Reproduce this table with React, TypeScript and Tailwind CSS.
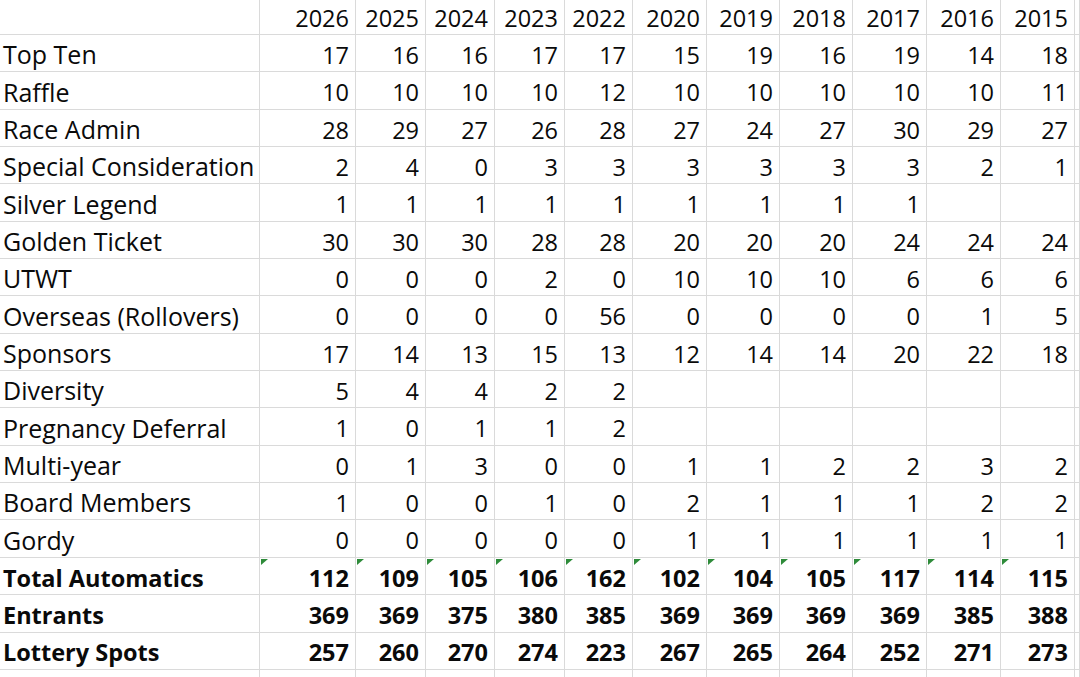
import React from "react";

const years = ["2026", "2025", "2024", "2023", "2022", "2020", "2019", "2018", "2017", "2016", "2015"];

const rows: { label: string; vals: (number | "")[]; bold?: boolean; tri?: boolean }[] = [
  { label: "Top Ten", vals: [17, 16, 16, 17, 17, 15, 19, 16, 19, 14, 18] },
  { label: "Raffle", vals: [10, 10, 10, 10, 12, 10, 10, 10, 10, 10, 11] },
  { label: "Race Admin", vals: [28, 29, 27, 26, 28, 27, 24, 27, 30, 29, 27] },
  { label: "Special Consideration", vals: [2, 4, 0, 3, 3, 3, 3, 3, 3, 2, 1] },
  { label: "Silver Legend", vals: [1, 1, 1, 1, 1, 1, 1, 1, 1, "", ""] },
  { label: "Golden Ticket", vals: [30, 30, 30, 28, 28, 20, 20, 20, 24, 24, 24] },
  { label: "UTWT", vals: [0, 0, 0, 2, 0, 10, 10, 10, 6, 6, 6] },
  { label: "Overseas (Rollovers)", vals: [0, 0, 0, 0, 56, 0, 0, 0, 0, 1, 5] },
  { label: "Sponsors", vals: [17, 14, 13, 15, 13, 12, 14, 14, 20, 22, 18] },
  { label: "Diversity", vals: [5, 4, 4, 2, 2, "", "", "", "", "", ""] },
  { label: "Pregnancy Deferral", vals: [1, 0, 1, 1, 2, "", "", "", "", "", ""] },
  { label: "Multi-year", vals: [0, 1, 3, 0, 0, 1, 1, 2, 2, 3, 2] },
  { label: "Board Members", vals: [1, 0, 0, 1, 0, 2, 1, 1, 1, 2, 2] },
  { label: "Gordy", vals: [0, 0, 0, 0, 0, 1, 1, 1, 1, 1, 1] },
  { label: "Total Automatics", vals: [112, 109, 105, 106, 162, 102, 104, 105, 117, 114, 115], bold: true, tri: true },
  { label: "Entrants", vals: [369, 369, 375, 380, 385, 369, 369, 369, 369, 385, 388], bold: true },
  { label: "Lottery Spots", vals: [257, 260, 270, 274, 223, 267, 265, 264, 252, 271, 273], bold: true },
];

const cell = "border-r border-b border-[#dadada] flex items-end overflow-hidden whitespace-nowrap";

export default function App() {
  return (
    <div
      className="w-[1080px] h-[677px] overflow-hidden bg-white text-[#0a0a0a] text-[23.5px] leading-none font-medium"
      style={{ fontFamily: "'Open Sans', Lato, sans-serif" }}
    >
      <div className="grid grid-cols-[260px_96px_70px_69px_70px_68px_74px_73px_73px_74px_74px_74px_1fr] grid-rows-[35px_repeat(18,37.35px)]">
        <div className={cell}></div>
        {years.map((y) => (
          <div key={y} className={`${cell} justify-end pr-[6px] pb-[4px]`}>
            {y}
          </div>
        ))}
        <div className={cell}></div>
        {rows.map((r) => (
          <React.Fragment key={r.label}>
            <div className={`${cell} pl-[3px] pb-[4px] ${r.bold ? "font-bold" : "text-[25px]"}`}>{r.label}</div>
            {r.vals.map((v, i) => (
              <div key={i} className={`${cell} relative justify-end pr-[6px] pb-[4px] ${r.bold ? "font-bold" : ""}`}>
                {r.tri && (
                  <svg className="absolute left-[1px] top-[1px]" width="7" height="6" viewBox="0 0 7 6">
                    <polygon points="0,0 7,0 0,6" fill="#2e8b3a" />
                  </svg>
                )}
                {v}
              </div>
            ))}
            <div className={cell}></div>
          </React.Fragment>
        ))}
        {Array.from({ length: 13 }).map((_, i) => (
          <div key={i} className={cell}></div>
        ))}
      </div>
    </div>
  );
}
